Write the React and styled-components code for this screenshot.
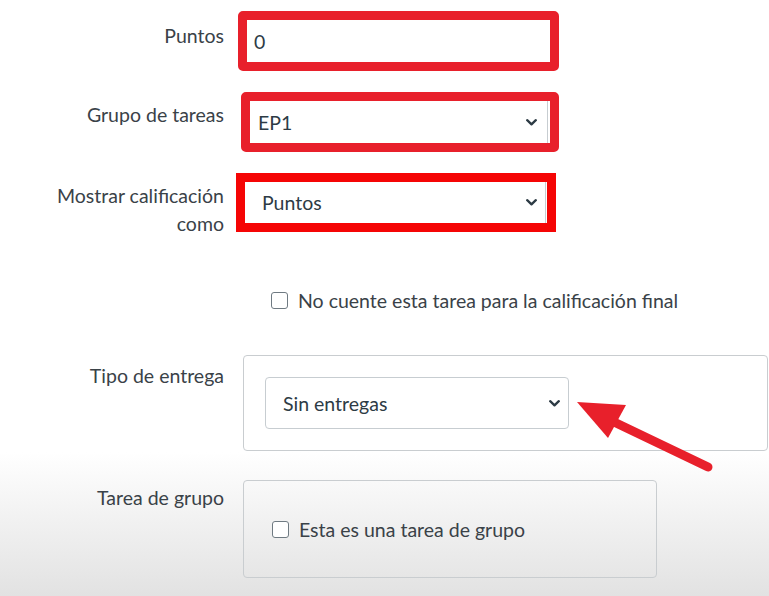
import styled, { createGlobalStyle } from 'styled-components';

const GlobalStyle = createGlobalStyle`
    html, body {
        margin: 0;
        padding: 0;
        min-height: 100%;
    }
    body {
        min-height: 596px;
        background: linear-gradient(to bottom, #ffffff 0, #ffffff 452px, #e2e2e2 596px);
        font-family: Lato, "Open Sans", "Liberation Sans", sans-serif;
        color: #3a4248;
    }
`

export const Page = styled.div`
    position: relative;
    width: 769px;
    min-height: 596px;
    padding-top: 11px;
    box-sizing: border-box;
`
export const Row = styled.div`
    display: grid;
    grid-template-columns: 224px 1fr;
    column-gap: 14px;
    align-items: start;
    margin-top: ${p => p.$gap || 0}px;
`
export const Label = styled.label`
    text-align: right;
    font-size: 19.5px;
    line-height: 28px;
    padding-top: ${p => p.$top || 0}px;
    color: #3a4248;
`
export const Highlight = styled.div`
    box-sizing: border-box;
    width: ${p => p.$w}px;
    height: ${p => p.$h}px;
    margin-left: ${p => p.$shift || 0}px;
    border: 9px solid ${p => p.$color || '#e8202b'};
    border-radius: ${p => (p.$square ? 0 : 5)}px;
    background: #fff;
    display: flex;
`
export const TextInput = styled.input`
    flex: 1;
    border: none;
    outline: none;
    font: inherit;
    font-size: 19.5px;
    color: #2d3b45;
    padding: 0 0 0 ${p => p.$pad || 7}px;
    background: transparent;
    min-width: 0;
`
export const SelectBox = styled.div`
    flex: ${p => (p.$fill ? 1 : 'none')};
    box-sizing: border-box;
    width: ${p => (p.$w ? `${p.$w}px` : 'auto')};
    height: ${p => (p.$h ? `${p.$h}px` : 'auto')};
    display: flex;
    align-items: center;
    justify-content: space-between;
    padding: 0 ${p => p.$right || 10}px 0 ${p => p.$left || 8}px;
    font-size: 19.5px;
    color: #2d3b45;
    background: #fff;
    border: ${p => (p.$outlined ? '1px solid #c7cdd1' : 'none')};
    border-right: 1px solid #c7cdd1;
    border-radius: ${p => (p.$outlined ? 4 : 0)}px;
    margin-right: ${p => p.$edge || 0}px;
`
export const CheckRow = styled.div`
    display: flex;
    align-items: center;
    gap: 10px;
    height: 28px;
    padding-left: ${p => p.$indent || 0}px;
    font-size: 19.5px;
    color: #3a4248;
`
export const Box = styled.span`
    box-sizing: border-box;
    width: 17px;
    height: 17px;
    border: 1.5px solid #6f7a82;
    border-radius: 3px;
    background: #fff;
    flex: none;
`
export const Panel = styled.div`
    box-sizing: border-box;
    width: ${p => p.$w}px;
    height: ${p => p.$h}px;
    margin-left: 5px;
    border: 1px solid #c9cdd0;
    border-radius: 4px;
    padding: ${p => p.$pad || '21px'};
    display: flex;
    align-items: ${p => (p.$center ? 'center' : 'flex-start')};
`
export const Arrow = styled.svg`
    position: absolute;
    left: 570px;
    top: 395px;
    pointer-events: none;
`

function Chevron() {
    return (
        <svg width="11" height="7" viewBox="0 0 11 7">
            <path d="M1.2 1.2 L5.5 5.3 L9.8 1.2" fill="none" stroke="#2d3b45" strokeWidth="2.3" strokeLinecap="round" strokeLinejoin="round" />
        </svg>
    )
}

function App() {
  return (
    <>
        <GlobalStyle />
        <Page>
            <Row>
                <Label $top={11}>Puntos</Label>
                <Highlight $w={321} $h={60}>
                    <TextInput defaultValue="0" $pad={7} />
                </Highlight>
            </Row>

            <Row $gap={21}>
                <Label $top={9}>Grupo de tareas</Label>
                <Highlight $w={318} $h={60} $shift={3}>
                    <SelectBox $fill $left={8} $right={10} $edge={2}>
                        EP1 <Chevron />
                    </SelectBox>
                </Highlight>
            </Row>

            <Row $gap={21}>
                <Label $top={9}>Mostrar calificación<br />como</Label>
                <Highlight $w={320} $h={59} $shift={-2} $color="#f50505" $square>
                    <SelectBox $fill $left={17} $right={8} $edge={1}>
                        Puntos <Chevron />
                    </SelectBox>
                </Highlight>
            </Row>

            {/* the two-line label above makes that row 238px tall, not 232 */}
            <Row $gap={48}>
                <span />
                <CheckRow $indent={33}>
                    <Box />
                    No cuente esta tarea para la calificación final
                </CheckRow>
            </Row>

            <Row $gap={41}>
                <Label $top={7}>Tipo de entrega</Label>
                <Panel $w={525} $h={96}>
                    <SelectBox $outlined $w={304} $h={52} $left={17} $right={8}>
                        Sin entregas <Chevron />
                    </SelectBox>
                </Panel>
            </Row>

            <Row $gap={29}>
                <Label $top={4}>Tarea de grupo</Label>
                <Panel $w={414} $h={98} $pad="0 0 0 28px" $center>
                    <CheckRow>
                        <Box />
                        Esta es una tarea de grupo
                    </CheckRow>
                </Panel>
            </Row>

            <Arrow width="150" height="82" viewBox="0 0 150 82">
                <line x1="44" y1="27" x2="138" y2="72" stroke="#e8202b" strokeWidth="9" strokeLinecap="round" />
                <polygon points="7,7 56,10 38,43" fill="#e8202b" />
            </Arrow>
        </Page>
    </>
  )
}

export default App
